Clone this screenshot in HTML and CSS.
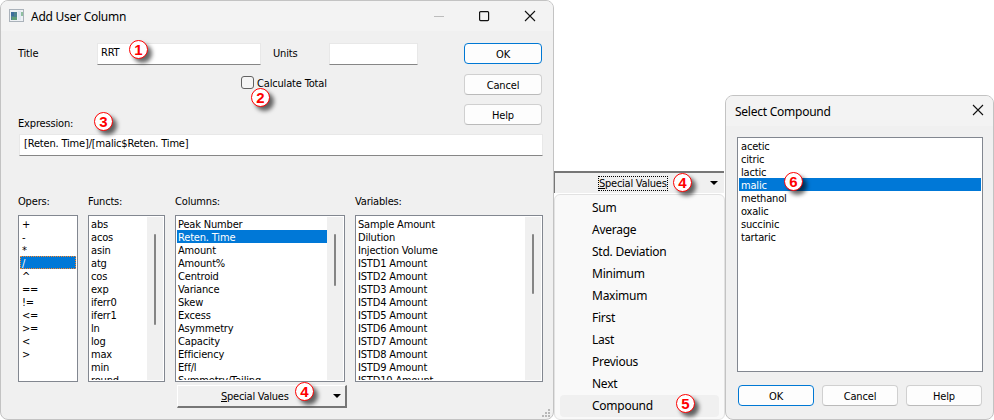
FILE: index.html
```html
<!DOCTYPE html>
<html lang="en">
<head>
  <meta charset="UTF-8">
  <title>Add User Column</title>
  <link rel="stylesheet" href="styles.css">
</head>
<body>

  <div class="dialog main-dialog">
    <div class="titlebar">
      <svg class="app-icon" width="16" height="14" viewBox="0 0 16 14">
        <rect x="0.5" y="0.5" width="14" height="12" fill="#eef1f4" stroke="#aab2ba"/>
        <rect x="2" y="3" width="6" height="8" fill="#4c8290"/>
        <rect x="2" y="3" width="3" height="4" fill="#3c6d9c"/>
        <rect x="3" y="8" width="5" height="3" fill="#5f9d78"/>
        <rect x="9" y="2" width="3" height="9" fill="#dfe8f2"/>
        <rect x="12" y="3" width="2" height="4" fill="#8fbf9f"/>
      </svg>
      <span class="title-text">Add User Column</span>
      <svg class="win-buttons" width="103" height="12" viewBox="0 0 103 12" fill="none">
        <path d="M0 6.5h10" stroke="#bcbcbc"/>
        <rect x="45.6" y="1.6" width="9" height="9" rx="1" stroke="#111" stroke-width="1.2"/>
        <path d="M91 1l10 10M101 1l-10 10" stroke="#111" stroke-width="1.1"/>
      </svg>
    </div>
    <div class="main-body">
      <div class="top">
        <div class="fields">
          <div class="field-row">
            <span class="label title-label">Title</span>
            <div class="input title-input">RRT</div>
            <span class="label units-label">Units</span>
            <div class="input units-input"></div>
          </div>
          <div class="check-row">
            <span class="checkbox"></span>
            <span class="label">Calculate Total</span>
          </div>
          <div class="label expression-label">Expression:</div>
        </div>
        <div class="button-column">
          <div class="button default">OK</div>
          <div class="button">Cancel</div>
          <div class="button">Help</div>
        </div>
      </div>
      <div class="input expression-input">[Reten. Time]/[malic$Reten. Time]</div>
      <div class="lists">
        <div class="list-group opers">
          <div class="label">Opers:</div>
          <div class="listbox">
            <div class="items">
              <div>+</div><div>-</div><div>*</div><div class="selected focused">/</div><div>^</div><div>==</div>
              <div>!=</div><div>&lt;=</div><div>&gt;=</div><div>&lt;</div><div>&gt;</div>
            </div>
          </div>
        </div>
        <div class="list-group functs">
          <div class="label">Functs:</div>
          <div class="listbox">
            <div class="items">
              <div>abs</div><div>acos</div><div>asin</div><div>atg</div><div>cos</div><div>exp</div><div>iferr0</div>
              <div>iferr1</div><div>ln</div><div>log</div><div>max</div><div>min</div><div>round</div>
            </div>
            <div class="scrollbar"><div class="thumb"></div></div>
          </div>
        </div>
        <div class="list-group columns">
          <div class="label">Columns:</div>
          <div class="listbox">
            <div class="items">
              <div>Peak Number</div><div class="selected">Reten. Time</div><div>Amount</div><div>Amount%</div>
              <div>Centroid</div><div>Variance</div><div>Skew</div><div>Excess</div><div>Asymmetry</div>
              <div>Capacity</div><div>Efficiency</div><div>Eff/l</div><div>Symmetry/Tailing</div>
            </div>
            <div class="scrollbar"><div class="thumb"></div></div>
          </div>
          <div class="drop-button">
            <span><u>S</u>pecial Values</span>
            <i class="arrow"></i>
          </div>
        </div>
        <div class="list-group variables">
          <div class="label">Variables:</div>
          <div class="listbox">
            <div class="items">
              <div>Sample Amount</div><div>Dilution</div><div>Injection Volume</div><div>ISTD1 Amount</div>
              <div>ISTD2 Amount</div><div>ISTD3 Amount</div><div>ISTD4 Amount</div><div>ISTD5 Amount</div>
              <div>ISTD6 Amount</div><div>ISTD7 Amount</div><div>ISTD8 Amount</div><div>ISTD9 Amount</div>
              <div>ISTD10 Amount</div>
            </div>
            <div class="scrollbar"><div class="thumb"></div></div>
          </div>
        </div>
      </div>
    </div>
    <svg class="grip" width="8" height="8" viewBox="0 0 8 8" fill="#b8b8b8">
      <path d="M6 0h2v2h-2zM3 3h2v2h-2zM6 3h2v2h-2zM0 6h2v2h-2zM3 6h2v2h-2zM6 6h2v2h-2z"/>
    </svg>
  </div>

  <div class="menu-panel">
    <div class="drop-button pressed">
      <span class="focus-box"><u>S</u>pecial Values</span>
      <i class="arrow"></i>
    </div>
    <div class="menu">
      <div>Sum</div>
      <div>Average</div>
      <div>Std. Deviation</div>
      <div>Minimum</div>
      <div>Maximum</div>
      <div>First</div>
      <div>Last</div>
      <div>Previous</div>
      <div>Next</div>
      <div class="hover">Compound</div>
    </div>
  </div>

  <div class="dialog select-dialog">
    <div class="titlebar">
      <span class="title-text">Select Compound</span>
      <svg class="win-buttons" width="12" height="12" viewBox="0 0 12 12" fill="none">
        <path d="M1 1l10 10M11 1l-10 10" stroke="#111" stroke-width="1.1"/>
      </svg>
    </div>
    <div class="select-body">
      <div class="listbox">
        <div class="items">
          <div>acetic</div><div>citric</div><div>lactic</div><div class="selected">malic</div>
          <div>methanol</div><div>oxalic</div><div>succinic</div><div>tartaric</div>
        </div>
      </div>
      <div class="button-row">
        <div class="button default">OK</div>
        <div class="button">Cancel</div>
        <div class="button">Help</div>
      </div>
    </div>
  </div>

  <!-- numbered callouts -->
  <div class="marker m1">1</div>
  <div class="marker m2">2</div>
  <div class="marker m3">3</div>
  <div class="marker m4">4</div>
  <div class="marker m4b">4</div>
  <div class="marker m5">5</div>
  <div class="marker m6">6</div>

</body>
</html>
```
FILE: styles.css
```css
* {
  box-sizing: border-box;
}
body {
  margin: 0;
  width: 994px;
  height: 420px;
  display: flex;
  align-items: flex-end;
  position: relative;
  overflow: hidden;
  background: #fff;
  color: #000;
  font-family: "DejaVu Sans Condensed", "DejaVu Sans", sans-serif;
  font-stretch: condensed;
  font-size: 11px;
  line-height: 13px;
  letter-spacing: -0.17px;
  white-space: nowrap;
}
.dialog {
  background: #f0f0f0;
  border: 1px solid #c3c3c3;
  border-radius: 8px;
  overflow: hidden;
  position: relative;
}
.main-dialog {
  width: 554px;
  height: 420px;
}
.titlebar {
  height: 30px;
  background: #f3f3f3;
  display: flex;
  align-items: center;
}
.title-text, .menu {
  font-family: "Noto Sans", sans-serif;
  font-stretch: normal;
  font-size: 12px;
  letter-spacing: -0.25px;
}
.main-dialog .titlebar {
  padding: 0 16px 0 8px;
}
.app-icon {
  margin-right: 6px;
}
.win-buttons {
  margin-left: auto;
}
.main-dialog .win-buttons {
  margin-top: -1px;
}
.main-body {
  padding: 12px 10px 0 17px;
}
.top {
  display: flex;
  justify-content: space-between;
  height: 90px;
  padding-right: 1px;
}
.field-row {
  display: flex;
}
.field-row .label {
  padding-top: 4px;
}
.title-label {
  width: 79px;
}
.units-label {
  width: 56px;
  margin-left: 12px;
}
.input {
  height: 22px;
  background: #fff;
  border: 1px solid #e8e8e8;
  border-bottom-color: #868686;
  padding: 2px 3px;
}
.title-input {
  width: 164px;
}
.units-input {
  width: 89px;
}
.check-row {
  display: flex;
  padding: 11px 0 0 223px;
  gap: 3px;
}
.check-row .label {
  padding-top: 1px;
}
.checkbox {
  width: 13px;
  height: 13px;
  border: 1px solid #626262;
  border-radius: 3px;
  background: #f5f5f5;
}
.expression-label {
  margin-top: 27px;
}
.button-column {
  display: flex;
  flex-direction: column;
  gap: 9px;
}
.button {
  width: 78px;
  height: 21px;
  background: #fdfdfd;
  border: 1px solid #d0d0d0;
  border-bottom-color: #bababa;
  border-radius: 4px;
  text-align: center;
  line-height: 21px;
}
.button-column .default {
  margin-bottom: 1px;
}
.button.default {
  border-color: #0078d4;
}
.expression-input {
  margin: 1px 0 0 1px;
  padding-left: 4px;
}
.lists {
  display: flex;
  gap: 10px;
  margin-top: 39px;
}
.list-group .label {
  height: 20px;
}
.listbox {
  display: flex;
  height: 167px;
  background: #fff;
  border: 1px solid #828790;
  padding: 1px;
  overflow: hidden;
}
.items {
  flex: 1;
  height: 163px;
  overflow: hidden;
}
.items div {
  height: 13px;
  padding-left: 1px;
  line-height: 15px;
}
.opers .items div {
  padding-left: 2px;
}
.items .selected {
  background: #0078d7;
  color: #fff;
}
.items .focused {
  outline: 1px dotted #ff8728;
  outline-offset: -1px;
}
.scrollbar {
  width: 16px;
  background: #f0f0f0;
  padding: 17px 0 0 7px;
}
.thumb {
  width: 2px;
  height: 52px;
  border-radius: 1px;
  background: #858585;
}
.opers {
  width: 60px;
}
.functs {
  width: 77px;
}
.functs .thumb {
  height: 91px;
}
.columns {
  width: 170px;
}
.variables {
  width: 188px;
}
.variables .thumb {
  height: 60px;
}
.drop-button {
  width: 170px;
  height: 23px;
  display: flex;
  align-items: center;
  justify-content: space-between;
  background: #f0f0f0;
  border: 1px solid #fff;
  border-right: 2px solid #767676;
  border-bottom: 2px solid #767676;
  padding: 0 4px 0 43px;
  letter-spacing: -0.25px;
}
.columns .drop-button {
  margin: 3px 0 0 2px;
}
.arrow {
  border: 4px solid transparent;
  border-top-color: #000;
  border-bottom: 0;
}
.grip {
  position: absolute;
  right: 3px;
  bottom: 2px;
}
.menu-panel {
  width: 171px;
}
.drop-button.pressed {
  height: 22px;
  border: 0;
  border-top: 2px solid #767676;
  border-left: 1px solid #767676;
  padding: 0 6px 0 44px;
}
.focus-box {
  outline: 1px dotted #000;
}
.menu {
  margin-top: 1px;
  height: 226px;
  border: 1px solid #e2e2e2;
  border-radius: 6px;
  background: #f9f9f9;
  padding: 2px 5px;
  line-height: 22px;
}
.menu div {
  height: 22px;
  padding-left: 32px;
}
.menu .hover {
  background: #f0f0f0;
  border-radius: 4px;
}
.select-dialog {
  width: 269px;
  height: 325px;
}
.select-dialog .titlebar {
  padding: 0 9px;
}
.select-dialog .win-buttons {
  margin-top: -2px;
}
.select-body {
  padding: 11px 10px 0 11px;
}
.select-body .listbox {
  height: 235px;
}
.select-body .items div {
  padding-left: 2px;
}
.button-row {
  display: flex;
  justify-content: space-between;
  padding: 13px 1px 0;
}
.button-row .button {
  width: 76px;
}
.marker {
  position: absolute;
  width: 19px;
  height: 19px;
  border: 1px solid #f00;
  border-radius: 50%;
  background: #fff;
  color: #f00;
  font: bold 15px/17px "Liberation Sans", sans-serif;
  letter-spacing: 0;
  text-align: center;
  box-shadow: 4px 4px 4px rgba(0, 0, 0, 0.6);
}
.m1 {
  left: 129px;
  top: 40px;
}
.m2 {
  left: 251px;
  top: 88px;
}
.m3 {
  left: 94px;
  top: 112px;
}
.m4 {
  left: 295px;
  top: 382px;
}
.m4b {
  left: 673px;
  top: 173px;
}
.m5 {
  left: 676px;
  top: 394px;
}
.m6 {
  left: 784px;
  top: 172px;
}
```
